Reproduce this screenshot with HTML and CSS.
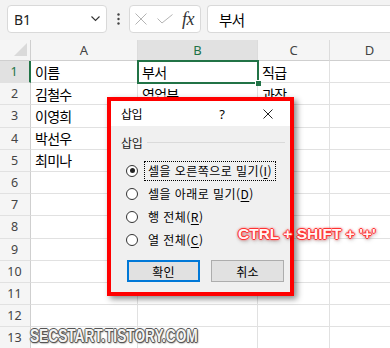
FILE: index.html
```html
<html lang="ko">

<head>
    <meta charset="UTF-8">
    <meta name="viewport" content="width=device-width, initial-scale=1.0">
    <title>삽입 - Excel</title>
    <link rel="stylesheet" href="styles.css">
</head>

<body>
    <!-- Formula bar -->
    <div class="formula-bar">
        <div class="name-box">
            <span>B1</span>
            <svg width="9" height="6" viewBox="0 0 9 6"><path d="M0.5 0.5 L4.5 4.5 L8.5 0.5" fill="none" stroke="#333" stroke-width="1.1"/></svg>
        </div>
        <div class="dots">
            <svg width="3" height="12" viewBox="0 0 3 12"><circle cx="1.5" cy="1.5" r="1.2" fill="#444"/><circle cx="1.5" cy="6" r="1.2" fill="#444"/><circle cx="1.5" cy="10.5" r="1.2" fill="#444"/></svg>
        </div>
        <div class="fx-box">
            <svg width="12" height="12" viewBox="0 0 12 12"><path d="M0.5 0.5 L11.5 11.5 M11.5 0.5 L0.5 11.5" stroke="#b4b4b4" stroke-width="1"/></svg>
            <svg width="16" height="10" viewBox="0 0 16 10"><path d="M0.5 4.5 L5 9 L15.5 0.5" fill="none" stroke="#b4b4b4" stroke-width="1"/></svg>
            <span class="fx">fx</span>
        </div>
        <div class="formula-input">부서</div>
    </div>

    <!-- Sheet grid -->
    <div class="sheet">
        <div class="row hdr">
            <div class="rh corner"></div>
            <div class="cell ca">A</div>
            <div class="cell cb active">B</div>
            <div class="cell cc">C</div>
            <div class="cell cd">D</div>
        </div>
        <div class="row">
            <div class="rh active">1</div>
            <div class="cell ca">이름</div>
            <div class="cell cb selected">부서</div>
            <div class="cell cc">직급</div>
            <div class="cell cd"></div>
        </div>
        <div class="row">
            <div class="rh">2</div>
            <div class="cell ca">김철수</div>
            <div class="cell cb">영업부</div>
            <div class="cell cc">과장</div>
            <div class="cell cd"></div>
        </div>
        <div class="row">
            <div class="rh">3</div>
            <div class="cell ca">이영희</div>
            <div class="cell cb"></div>
            <div class="cell cc"></div>
            <div class="cell cd"></div>
        </div>
        <div class="row">
            <div class="rh">4</div>
            <div class="cell ca">박선우</div>
            <div class="cell cb"></div>
            <div class="cell cc"></div>
            <div class="cell cd"></div>
        </div>
        <div class="row">
            <div class="rh">5</div>
            <div class="cell ca">최미나</div>
            <div class="cell cb"></div>
            <div class="cell cc"></div>
            <div class="cell cd"></div>
        </div>
        <div class="row">
            <div class="rh">6</div>
            <div class="cell ca"></div><div class="cell cb"></div><div class="cell cc"></div><div class="cell cd"></div>
        </div>
        <div class="row">
            <div class="rh">7</div>
            <div class="cell ca"></div><div class="cell cb"></div><div class="cell cc"></div><div class="cell cd"></div>
        </div>
        <div class="row">
            <div class="rh">8</div>
            <div class="cell ca"></div><div class="cell cb"></div><div class="cell cc"></div><div class="cell cd"></div>
        </div>
        <div class="row">
            <div class="rh">9</div>
            <div class="cell ca"></div><div class="cell cb"></div><div class="cell cc"></div><div class="cell cd"></div>
        </div>
        <div class="row">
            <div class="rh">10</div>
            <div class="cell ca"></div><div class="cell cb"></div><div class="cell cc"></div><div class="cell cd"></div>
        </div>
        <div class="row">
            <div class="rh">11</div>
            <div class="cell ca"></div><div class="cell cb"></div><div class="cell cc"></div><div class="cell cd"></div>
        </div>
        <div class="row">
            <div class="rh">12</div>
            <div class="cell ca"></div><div class="cell cb"></div><div class="cell cc"></div><div class="cell cd"></div>
        </div>
        <div class="row">
            <div class="rh">13</div>
            <div class="cell ca"></div><div class="cell cb"></div><div class="cell cc"></div><div class="cell cd"></div>
        </div>
    </div>

    <!-- Insert dialog -->
    <div class="dialog">
        <div class="dlg-title">
            <span class="dlg-name">삽입</span>
            <span class="dlg-help">?</span>
            <svg class="dlg-close" width="10" height="10" viewBox="0 0 10 10"><path d="M0.5 0.5 L9.5 9.5 M9.5 0.5 L0.5 9.5" stroke="#222" stroke-width="1"/></svg>
        </div>
        <div class="dlg-body">
            <div class="group-label"><span>삽입</span><div class="group-line"></div></div>
            <div class="option"><span class="radio on"></span><span class="opt-text focus">셀을 오른쪽으로 밀기(<u>I</u>)</span></div>
            <div class="option"><span class="radio"></span><span class="opt-text">셀을 아래로 밀기(<u>D</u>)</span></div>
            <div class="option"><span class="radio"></span><span class="opt-text">행 전체(<u>R</u>)</span></div>
            <div class="option"><span class="radio"></span><span class="opt-text">열 전체(<u>C</u>)</span></div>
            <div class="dlg-buttons">
                <button class="btn default">확인</button>
                <button class="btn">취소</button>
            </div>
        </div>
    </div>

    <div class="shortcut">CTRL + SHIFT + '+'</div>
    <div class="watermark">SECSTART.TISTORY.COM</div>
</body>

</html>
```

FILE: styles.css
```css
body {
    margin: 0;
    width: 390px;
    height: 348px;
    overflow: hidden;
    position: relative;
    background: #fff;
    font-family: "Noto Sans CJK KR", "Noto Sans", sans-serif;
    color: #000;
}

/* Formula bar */
.formula-bar {
    display: flex;
    align-items: flex-start;
    height: 40px;
    padding: 5px 0 0 7px;
    box-sizing: border-box;
    background: #f3f3f3;
}

.name-box,
.fx-box,
.formula-input {
    height: 28px;
    box-sizing: border-box;
    background: #fff;
    border: 1px solid #d9d9d9;
    border-radius: 4px;
}

.name-box {
    width: 100px;
    display: flex;
    align-items: center;
    justify-content: space-between;
    padding: 0 6px 0 6px;
    font-family: "Noto Sans", sans-serif;
    font-size: 14px;
    color: #222;
}

.dots {
    width: 22px;
    height: 28px;
    display: flex;
    align-items: center;
    justify-content: center;
}

.fx-box {
    width: 72px;
    display: flex;
    align-items: center;
    padding-left: 5px;
    gap: 10px;
}

.fx {
    font-family: "Liberation Serif", serif;
    font-style: italic;
    font-size: 18px;
    color: #333;
    margin-left: -1px;
    letter-spacing: -0.5px;
}

.formula-input {
    flex: 1;
    margin-left: 6px;
    border-right: none;
    border-radius: 4px 0 0 4px;
    padding-left: 11px;
    display: flex;
    align-items: center;
    font-size: 14.5px;
    letter-spacing: -0.6px;
}

/* Sheet */
.sheet {
    width: 390px;
    overflow: hidden;
}

.row {
    display: flex;
    height: 22.2px;
}

.row.hdr {
    height: 21px;
    background: #f5f5f5;
}

.cell,
.rh {
    box-sizing: border-box;
    border-right: 1px solid #e1e1e1;
    border-bottom: 1px solid #e1e1e1;
    display: flex;
    align-items: center;
    flex-shrink: 0;
}

.cell {
    padding-left: 4px;
    font-size: 14px;
    letter-spacing: -0.7px;
}

.rh {
    width: 31px;
    justify-content: center;
    background: #f5f5f5;
    border-right-color: #cfcfcf;
    font-family: "Noto Sans", sans-serif;
    font-size: 12.5px;
    color: #444;
    padding-right: 1px;
}

.rh.active {
    background: #e1e1e1;
    color: #217346;
    border-right: 2px solid #217346;
}

.hdr .cell {
    justify-content: center;
    padding-left: 0;
    font-family: "Noto Sans", sans-serif;
    font-size: 13px;
    letter-spacing: 0;
    color: #444;
    border-bottom-color: #cfcfcf;
    border-right-color: #dcdcdc;
}

.hdr .cell.active {
    background: #e1e1e1;
    color: #217346;
}

.corner {
    position: relative;
    border-bottom-color: #cfcfcf;
}

.corner::after {
    content: "";
    position: absolute;
    right: 3px;
    bottom: 4px;
    width: 0;
    height: 0;
    border-left: 13px solid transparent;
    border-bottom: 13px solid #dadada;
}

.ca { width: 107px; }
.cb { width: 120px; }
.cc { width: 72px; }
.cd { width: 80px; }

.selected {
    position: relative;
    z-index: 1;
    outline: 2px solid #217346;
    outline-offset: -1px;
}

.selected::after {
    content: "";
    position: absolute;
    right: -4px;
    bottom: -4px;
    width: 5px;
    height: 5px;
    background: #217346;
    border: 1px solid #fff;
    border-width: 1px 0 0 1px;
}

/* Dialog */
.dialog {
    position: absolute;
    left: 107px;
    top: 97px;
    width: 187px;
    height: 199px;
    box-sizing: border-box;
    border: 4px solid #ff0000;
    background: #f0f0f0;
    box-shadow: 3px 3px 6px rgba(0, 0, 0, 0.45);
    z-index: 5;
    font-size: 12px;
}

.dlg-title {
    height: 25px;
    background: #fff;
    display: flex;
    align-items: center;
    padding: 0 17px 0 10px;
}

.dlg-name {
    flex: 1;
    letter-spacing: -0.5px;
}

.dlg-help {
    font-family: "Noto Sans", sans-serif;
    font-size: 13px;
    margin-right: 38px;
}

.group-label {
    display: flex;
    align-items: center;
    height: 16px;
    margin-top: 8px;
    padding: 0 5px 0 10px;
}

.group-label span {
    letter-spacing: -0.3px;
    color: #222;
}

.group-line {
    flex: 1;
    height: 1px;
    margin-left: 5px;
    background: #dadada;
}

.option {
    display: flex;
    align-items: center;
    height: 23px;
    padding-left: 15px;
}

.group-label + .option {
    margin-top: 9px;
}

.radio {
    position: relative;
    width: 12px;
    height: 12px;
    box-sizing: border-box;
    border: 1px solid #333;
    border-radius: 50%;
    background: #fff;
    margin-right: 6px;
}

.radio.on::after {
    content: "";
    position: absolute;
    left: 2.5px;
    top: 2.5px;
    width: 5px;
    height: 5px;
    border-radius: 50%;
    background: #222;
}

.opt-text {
    padding: 0 3px;
    line-height: 18px;
    border: 1px solid transparent;
    letter-spacing: 0.45px;
}

.opt-text.focus {
    border: 1px dotted #000;
}

.opt-text u {
    text-underline-offset: 2px;
}

.dlg-buttons {
    display: flex;
    gap: 11px;
    margin-top: 9px;
    padding-left: 16px;
}

.btn {
    width: 73px;
    height: 22px;
    box-sizing: border-box;
    background: #e1e1e1;
    border: 1px solid #adadad;
    font-family: "Noto Sans CJK KR", sans-serif;
    font-size: 12px;
    letter-spacing: 0.3px;
    color: #000;
    padding: 0;
}

.btn.default {
    border: 2px solid #0078d7;
}

/* Overlay captions */
.shortcut {
    position: absolute;
    left: 238px;
    top: 225px;
    z-index: 6;
    font-family: "Liberation Sans", sans-serif;
    font-weight: bold;
    font-size: 15.5px;
    line-height: 18px;
    color: #fff6f6;
    white-space: nowrap;
    text-shadow: 1px 0 0 #ff3030, -1px 0 0 #ff3030, 0 1px 0 #ff3030, 0 -1px 0 #ff3030,
        0 0 3px #ff4040, 0 0 3px #ff4040, 1px 2px 4px rgba(0, 0, 0, 0.4);
}

.watermark {
    position: absolute;
    left: 30px;
    top: 326px;
    z-index: 6;
    font-family: "Liberation Sans", sans-serif;
    font-weight: bold;
    font-size: 18px;
    line-height: 20px;
    color: #f4f4f4;
    transform: scaleX(0.76);
    transform-origin: left center;
    white-space: nowrap;
    text-shadow: 1px 0 0 #555, -1px 0 0 #555, 0 1px 0 #555, 0 -1px 0 #555,
        0 0 2px #444, 1px 1px 2px #333;
}
```
